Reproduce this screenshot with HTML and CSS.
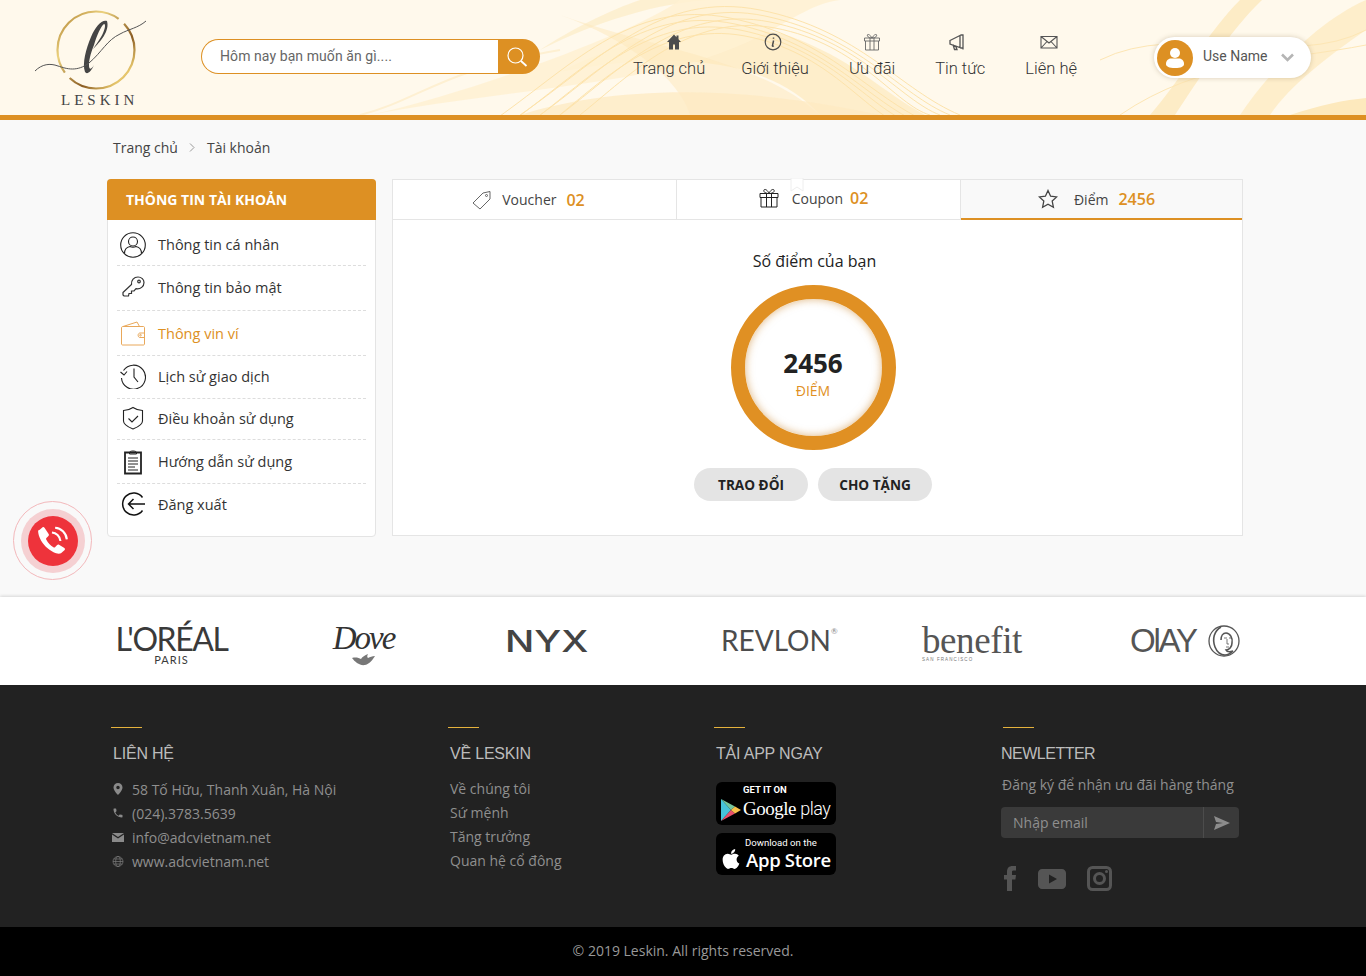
FILE: index.html
```html
<!DOCTYPE html>
<html lang="en">
<head>
  <meta charset="UTF-8" />
  <meta name="viewport" content="width=device-width, initial-scale=1.0"/>
  <title>Leskin - Tài khoản</title>
  <link rel="stylesheet" href="styles.css">
</head>
<body>

  <header class="header">
    <!-- waves behind the header -->
    <svg class="header-bg" viewBox="0 0 1366 115" preserveAspectRatio="none">
      <defs>
        <g id="wave-a" fill="none" stroke="#fde3ab" stroke-width="1">
          <path d="M520 115C600 60 660 -10 760 10S900 90 960 115"/>
          <path d="M540 115C610 65 670 -4 765 16S900 95 950 115"/>
          <path d="M560 115C620 70 680 4 770 22S900 100 940 115"/>
          <path d="M580 115C630 75 690 12 775 28S895 105 930 115"/>
        </g>
      </defs>
      <path d="M540 50C600 20 670 -2 730 0H640C610 10 570 30 540 50Z" fill="#fdeecb" opacity=".8"/>
      <path d="M560 72C640 30 740 15 800 40S880 90 925 115H820C780 70 700 45 560 72Z" fill="#fde9bd" opacity=".7"/>
      <path d="M370 115C470 95 620 85 700 60S800 5 840 0H680C640 30 480 90 370 115Z" fill="#fff1d2" opacity=".85"/>
      <path d="M560 15C660 50 760 60 820 115H690C680 80 630 40 560 15Z" fill="#fde8ba" opacity=".5"/>
      <path d="M520 115C600 90 720 80 880 115Z" fill="#fdeac2" opacity=".75"/>
      <use href="#wave-a"/>
      <use href="#wave-a" x="-30" y="8"/>
      <path d="M1150 115C1180 80 1210 30 1240 0H1262C1230 30 1195 85 1175 115Z" fill="#fde9bd" opacity=".8"/>
      <path d="M1240 115C1270 70 1320 20 1366 0V30C1330 55 1290 85 1270 115Z" fill="#fde9bd" opacity=".7"/>
      <path d="M1290 115C1320 105 1345 100 1366 98V115Z" fill="#fde9bd"/>
      <path d="M1100 60C1180 20 1290 70 1366 30" fill="none" stroke="#fde6b4" stroke-width="1"/>
      <path d="M1120 115C1200 60 1290 60 1366 45" fill="none" stroke="#fde6b4" stroke-width="1"/>
      <path d="M360 115C420 100 440 70 560 50" fill="none" stroke="#fef0d2" stroke-width="2"/>
    </svg>

    <a class="logo" href="#">
      <svg class="logo-mark" width="112" height="84" viewBox="0 0 112 84">
        <defs>
          <linearGradient id="gold" x1="0" y1="0" x2="1" y2="1">
            <stop offset="0" stop-color="#a8792a"/>
            <stop offset=".3" stop-color="#ecd27e"/>
            <stop offset=".65" stop-color="#8a5c22"/>
            <stop offset=".85" stop-color="#e7c76c"/>
            <stop offset="1" stop-color="#6b4418"/>
          </linearGradient>
        </defs>
        <circle cx="62" cy="42" r="38.500" pathLength="100" stroke-dasharray="37 3 45 3 12 0" fill="none" stroke="url(#gold)" stroke-width="2.200"/>
        <path d="M73 13C68 11 61 19 57 29C52 41 48 55 51 64C53 67 57 64 60 57C57 62 55 62 55 57C55 50 58 42 60 37C63 27 67 18 70 16C72 16 71 22 67 29C64 34 61 38 59 41C66 34 76 23 73 13Z" fill="#454545"/>
        <path d="M1 63C8 56 16 55 24 58C33 61 43 64 55 55C68 44 73 32 86 26C95 21 104 20 112 13" fill="none" stroke="#555" stroke-width="1"/>
      </svg>
      <span class="logo-name">LESKIN</span>
    </a>

    <form class="search">
      <input class="search-input" type="text" placeholder="Hôm nay bạn muốn ăn gì....">
      <button class="search-btn" type="button">
        <svg width="22" height="22" viewBox="0 0 22 22" fill="none" stroke="#fff" stroke-width="1.200"><circle cx="9.500" cy="9.500" r="7.500"/><path d="M15 15l5.500 5" stroke-width="1.800"/></svg>
      </button>
    </form>

    <nav class="nav">
      <a class="nav-item nav-home" href="#">
        <svg width="18" height="18" viewBox="0 0 18 18" fill="#4d4d4d"><path d="M9 1.500L2 9h2v7.500h4v-5h2v5h4V9h2l-2.500-2.700V2.500h-2v1.700z"/></svg>
        Trang chủ
      </a>
      <a class="nav-item nav-about" href="#">
        <svg width="18" height="18" viewBox="0 0 18 18" fill="none" stroke="#4d4d4d" stroke-width="1.200"><circle cx="9" cy="9" r="7.800"/><path d="M9.500 4.500v1.200M9.600 7.500L8.400 12.800c0 .5.500.6 1.300-.2" stroke-width="1.500"/></svg>
        Giới thiệu
      </a>
      <a class="nav-item" href="#">
        <svg width="18" height="18" viewBox="0 0 18 18" fill="none" stroke="#666" stroke-width=".9"><path d="M1.500 5h15v3h-15zM2.500 8v9h13V8M7 5v12M11 5v12M9 5C7 1 3.500 .5 4.500 3 5 4.300 7 5 9 5c2 0 4-.7 4.500-2C14.500 .5 11 1 9 5z"/></svg>
        Ưu đãi
      </a>
      <a class="nav-item nav-news" href="#">
        <svg width="20" height="18" viewBox="0 0 20 18" fill="none" stroke="#555" stroke-width="1.300"><path d="M2 7.500l10-5v12l-10-3.500zM5 11.500l1.500 5h2.500l-1.500-4M15 1.500v15M12.500 2h3M12.500 15h3"/></svg>
        Tin tức
      </a>
      <a class="nav-item nav-news" href="#">
        <svg width="18" height="18" viewBox="0 0 18 18" fill="none" stroke="#555" stroke-width="1.100"><path d="M1 3.500h16v11.500H1zM1 3.500l8 6.500 8-6.500M1 15l6-6.500M17 15l-6-6.500"/></svg>
        Liên hệ
      </a>
    </nav>

    <div class="user">
      <span class="user-avatar">
        <svg width="18" height="22" viewBox="0 0 18 22" fill="#fff"><circle cx="9" cy="6" r="5"/><path d="M0 17c0-4 3-5.500 5-5.500h8c2 0 5 1.500 5 5.500 0 2.500-3 4-9 4s-9-1.500-9-4z"/></svg>
      </span>
      <span class="user-name">Use Name</span>
      <svg class="user-caret" width="13" height="9" viewBox="0 0 13 9" fill="none" stroke="#b5b5b5" stroke-width="2.600"><path d="M1 1.500l5.500 5.500 5.500-5.500"/></svg>
    </div>
  </header>

  <main class="main">
    <div class="breadcrumb">
      <a href="#">Trang chủ</a>
      <svg width="6" height="9" viewBox="0 0 6 9" fill="none" stroke="#999"><path d="M1 .5l4 4-4 4"/></svg>
      <a href="#">Tài khoản</a>
    </div>

    <div class="account">
      <aside class="side">
        <h3 class="side-title">THÔNG TIN TÀI KHOẢN</h3>
        <ul class="side-menu">
          <li class="side-item">
            <svg width="26" height="26" viewBox="0 0 26 26" fill="none" stroke="#222" stroke-width="1.100"><circle cx="13" cy="13" r="12.300"/><circle cx="13" cy="9.500" r="4.500"/><path d="M4.500 21.500c0-5 3-6.500 5.500-7 2 1 4 1 6 0 2.500.5 5.500 2 5.500 7"/></svg>
            Thông tin cá nhân
          </li>
          <li class="side-item">
            <svg width="26" height="24" viewBox="0 0 26 24" fill="none" stroke="#333" stroke-width="1.200"><path d="M3 17.500l8.500-8C11 5 14 2 18 2c3.500 0 6 2.500 6 5.500 0 4-3.500 7-8 6.200l-2 2.300h-2.500v2.500H9l-.5 2.500H4l-1-1z"/><circle cx="19" cy="6.500" r="1.300"/></svg>
            Thông tin bảo mật
          </li>
          <li class="side-item is-active">
            <svg width="26" height="26" viewBox="0 0 26 26" fill="none" stroke="#e9a85a" stroke-width="1"><path d="M3 6.500h20.500c.5 0 1 .5 1 1V24c0 .5-.5 1-1 1H2.500c-.5 0-1-.5-1-1V8C1.500 7 2 6.500 3 6.500zM3 6.500L17 2l2.500 4.500M24.500 13h-4.500c-2.500 0-2.500 4.500 0 4.500h4.500"/><circle cx="20.500" cy="15.200" r=".8"/></svg>
            Thông vin ví
          </li>
          <li class="side-item">
            <svg width="26" height="26" viewBox="0 0 26 26" fill="none" stroke="#222" stroke-width="1.100"><path d="M3.500 7.500A12 12 0 1 1 1.500 15M.5 9l3.500 3 3-3.500M14 5.500V14l4 5"/></svg>
            Lịch sử giao dịch
          </li>
          <li class="side-item">
            <svg width="26" height="26" viewBox="0 0 26 26" fill="none" stroke="#222" stroke-width="1.100"><path d="M13 2.500C10 4.500 7 5.500 3.500 5.500v10.500c0 3 4.500 6 9.500 8 5-2 9.500-5 9.500-8V5.500C19 5.500 16 4.500 13 2.500zM8.500 13.500l3.500 3.500 6-6"/></svg>
            Điều khoản sử dụng
          </li>
          <li class="side-item">
            <svg width="26" height="26" viewBox="0 0 26 26" fill="none" stroke="#222"><path d="M5 3.500h16v21H5z" stroke-width="1.800"/><path d="M9.500 3.500c0-2 7-2 7 0v1.500h-7zM8 9h10M8 12h10M8 15h10M8 18h7M8 21h10" stroke-width="1"/></svg>
            Hướng dẫn sử dụng
          </li>
          <li class="side-item">
            <svg width="26" height="26" viewBox="0 0 26 26" fill="none" stroke="#111" stroke-width="1.500"><path d="M22.500 6.500A11 11 0 1 0 22.500 19.500M25 13H9M13.500 8L8.500 13l5 5"/></svg>
            Đăng xuất
          </li>
        </ul>
      </aside>

      <section class="panel">
        <div class="tabs">
          <a class="tab tab-voucher" href="#">
            <svg width="20" height="20" viewBox="0 0 20 20" fill="none" stroke="#555" stroke-width=".9"><path d="M1 13L11 3l7-1.500L18 9 8 19zM15 5v0"/><circle cx="14.500" cy="5.500" r="1"/></svg>
            <span>Voucher</span><b class="tab-num">02</b>
          </a>
          <a class="tab tab-coupon" href="#">
            <svg class="tab-ghost" width="14" height="14" viewBox="0 0 14 14" fill="#fff" stroke="#eee"><path d="M1 0h12v13l-6-4-6 4z"/></svg>
            <svg class="tab-icon" width="20" height="20" viewBox="0 0 20 20" fill="none" stroke="#222" stroke-width="1"><path d="M1 5.500h18v4H1zM2 9.500v9.500h16V9.500M7.500 5.500V19M12.500 5.500V19M10 5.500C8 .5 4 .5 5 3.500 5.500 5 8 5.500 10 5.500c2 0 4.500-.5 5-2C16 .5 12 .5 10 5.500z"/></svg>
            <span>Coupon</span><b class="tab-num">02</b>
          </a>
          <a class="tab is-active" href="#">
            <svg class="tab-icon" width="20" height="20" viewBox="0 0 20 20" fill="none" stroke="#444" stroke-width="1.300"><path d="M10 1.500l2.600 5.700 6.100.7-4.500 4.200 1.200 6.200L10 15.200l-5.400 3.100 1.200-6.200-4.500-4.200 6.100-.7z"/></svg>
            <span>Điểm</span><b class="tab-num">2456</b>
          </a>
        </div>

        <div class="points">
          <p class="points-label">Số điểm của bạn</p>
          <div class="points-ring">
            <strong class="points-value">2456</strong>
            <span class="points-unit">ĐIỂM</span>
          </div>
          <div class="points-actions">
            <button class="pill" type="button">TRAO ĐỔI</button>
            <button class="pill" type="button">CHO TẶNG</button>
          </div>
        </div>
      </section>
    </div>
  </main>

  <div class="brands">
    <div class="brand brand-loreal">L'ORÉAL<small>PARIS</small></div>
    <div class="brand brand-dove">Dove<svg width="24" height="13" viewBox="0 0 24 13" fill="#777"><path d="M0 4c4-1 7 0 9 1 1-2 4-4 7-5-1 2-1 3 0 4 2-1 4-2 7-2-2 3-5 8-10 9-5 1-10-3-13-7z"/></svg></div>
    <div class="brand brand-nyx"><span>NYX</span></div>
    <div class="brand brand-revlon">REVLON<sup>®</sup></div>
    <div class="brand brand-benefit">benefit<small>SAN FRANCISCO</small></div>
    <div class="brand brand-olay">OlAY
      <svg width="32" height="32" viewBox="0 0 32 32" fill="none" stroke="#555"><circle cx="16" cy="16" r="15" stroke-width="1.300"/><path d="M13 2C6 6 4 14 7 22c2 5 6 8 10 8 3 0 6-2 8-4-3 1-6 1-7-1 3 0 6-3 6-7 1-5-2-10-6-10-3 0-5 3-5 7" stroke-width="1.600"/><path d="M16 13h3M21 13h2M19 14v5h2M18 22h3" stroke-width=".8"/></svg>
    </div>
  </div>

  <footer class="footer">
    <div class="footer-main">
      <div class="col col-contact">
        <h4 class="col-title">LIÊN HỆ</h4>
        <ul class="contact">
          <li>
            <svg width="10" height="12" viewBox="0 0 10 12" fill="#8a8a8a"><path d="M5 0a4.500 4.500 0 0 0-4.500 4.500C.5 7.500 5 12 5 12s4.500-4.500 4.500-7.500A4.500 4.500 0 0 0 5 0zm0 6.300a1.700 1.700 0 1 1 0-3.500 1.700 1.700 0 0 1 0 3.500z"/></svg>
            58 Tố Hữu, Thanh Xuân, Hà Nội
          </li>
          <li>
            <svg width="12" height="12" viewBox="0 0 24 24" fill="#8a8a8a"><path d="M6.620 10.790c1.440 2.830 3.760 5.140 6.590 6.590l2.200-2.200c.27-.27.67-.36 1.020-.24 1.120.37 2.330.57 3.570.57.55 0 1 .45 1 1V20c0 .55-.45 1-1 1-9.390 0-17-7.610-17-17 0-.55.45-1 1-1h3.500c.55 0 1 .45 1 1 0 1.250.2 2.450.57 3.570.11.35.03.74-.25 1.020l-2.200 2.200z"/></svg>
            (024).3783.5639
          </li>
          <li>
            <svg width="12" height="9" viewBox="0 0 12 9" fill="#8a8a8a"><path d="M0 0h12L6 4zM0 1.500l6 4 6-4V9H0z"/></svg>
            info@adcvietnam.net
          </li>
          <li>
            <svg width="11" height="11" viewBox="0 0 11 11" fill="none" stroke="#7c7c7c" stroke-width=".7"><circle cx="5.500" cy="5.500" r="5"/><ellipse cx="5.500" cy="5.500" rx="2.300" ry="5"/><path d="M.5 5.500h10M1.300 3h8.400M1.300 8h8.400"/></svg>
            www.adcvietnam.net
          </li>
        </ul>
      </div>

      <div class="col col-about">
        <h4 class="col-title">VỀ LESKIN</h4>
        <ul class="links">
          <li><a href="#">Về chúng tôi</a></li>
          <li><a href="#">Sứ mệnh</a></li>
          <li><a href="#">Tăng trưởng</a></li>
          <li><a href="#">Quan hệ cổ đông</a></li>
        </ul>
      </div>

      <div class="col col-app">
        <h4 class="col-title">TẢI APP NGAY</h4>
        <a class="store store-google" href="#">
          <svg width="20" height="22" viewBox="0 0 20 22"><path d="M0 0l10 11L0 22z" fill="#46c3d9"/><path d="M0 0l14 7.500L10 11z" fill="#74c69d"/><path d="M0 22l14-7.500L10 11z" fill="#e8506a"/><path d="M14 7.500l6 3.500-6 3.500L10 11z" fill="#f7c04a"/></svg>
          <small>GET IT ON</small>
          <span>Google <i>play</i></span>
        </a>
        <a class="store store-apple" href="#">
          <svg width="20" height="22" viewBox="3 2 18 20" fill="#fff"><path d="M17.050 20.280c-.98.95-2.050.8-3.080.35-1.090-.46-2.090-.48-3.240 0-1.440.62-2.200.44-3.060-.35C2.790 15.250 3.510 7.590 9.050 7.310c1.350.07 2.290.74 3.080.8 1.180-.24 2.310-.93 3.570-.84 1.510.12 2.650.72 3.400 1.800-3.120 1.870-2.380 5.980.48 7.130-.57 1.500-1.310 2.990-2.540 4.090zM12.030 7.250c-.15-2.230 1.660-4.070 3.740-4.250.29 2.580-2.340 4.500-3.740 4.250z"/></svg>
          <small>Download on the</small>
          <span>App Store</span>
        </a>
      </div>

      <div class="col col-news">
        <h4 class="col-title">NEWLETTER</h4>
        <p class="news-text">Đăng ký để nhận ưu đãi hàng tháng</p>
        <form class="news-form">
          <input class="news-input" type="text" placeholder="Nhập email">
          <button class="news-send" type="button">
            <svg width="16" height="14" viewBox="0 0 16 14" fill="#8c8c8c"><path d="M0 0l16 7-16 7 2-6 7-1-7-1z"/></svg>
          </button>
        </form>
        <div class="social">
          <svg width="12" height="25" viewBox="0 0 12 25" fill="#555"><path d="M3 25V13.500H0V9h3V6c0-4 2-6 5.500-6H12v4.500H9.500C8 4.500 8 5.200 8 6.500V9h4l-.6 4.500H8V25z"/></svg>
          <svg width="28" height="20" viewBox="0 0 28 20" fill="#555"><path d="M4 0h20c2 0 4 2 4 4v12c0 2-2 4-4 4H4c-2 0-4-2-4-4V4c0-2 2-4 4-4zm7 5.500v9l8-4.500z" fill-rule="evenodd"/></svg>
          <svg width="25" height="25" viewBox="0 0 25 25" fill="none" stroke="#555"><rect x="1.500" y="1.500" width="22" height="22" rx="4" stroke-width="3"/><circle cx="12.500" cy="12.500" r="5" stroke-width="3"/><circle cx="19.500" cy="5.500" r="1.500" fill="#555" stroke="none"/></svg>
        </div>
      </div>
    </div>
    <div class="copyright">© 2019 Leskin. All rights reserved.</div>
  </footer>

  <!-- floating call button -->
  <a class="call" href="#">
    <span class="call-mid">
      <span class="call-core">
        <svg width="34" height="34" viewBox="0 0 32 32"><path d="M2 6.500c0 1 .2 3 1.500 6.500 3 7 8 11 13 13.500 2 1 5 2 7 1l3.500-3c.5-.7.3-1.300-.3-1.800l-5-3.200c-.7-.4-1.300-.2-1.800.3l-2 2c-.5.4-1 .4-1.500.1-3-1.800-5-4-6.800-7.300-.3-.6-.2-1 .2-1.500l1.900-1.900c.5-.5.6-1.100.2-1.800L8 3.500c-.5-.7-1.200-.8-1.800-.4L3.500 5.500C2.700 5.800 2 6 2 6.500z" fill="#fff"/><path d="M15 8c4 .3 7.500 3.500 8 8M18 3.500c5.500.3 10.500 5 11 11" fill="none" stroke="#fff" stroke-width="2"/></svg>
      </span>
    </span>
  </a>

</body>
</html>
```

FILE: styles.css
```css
* {
  box-sizing: border-box;
}
body {
  margin: 0;
  background: #f9f9f9;
  font-family: "Open Sans", "Noto Sans", sans-serif;
  font-size: 14px;
  color: #333;
}
a {
  color: inherit;
  text-decoration: none;
}
ul {
  margin: 0;
  padding: 0;
  list-style: none;
}

/* header */
.header {
  position: relative;
  display: flex;
  align-items: flex-start;
  height: 120px;
  background: #fff9ec;
  border-bottom: 5px solid #dd9023;
  overflow: hidden;
}
.header-bg {
  position: absolute;
  left: 0;
  top: 0;
  width: 100%;
  height: 115px;
}
.logo {
  position: relative;
  display: flex;
  flex-direction: column;
  width: 112px;
  margin: 8px 0 0 34px;
}
.logo-mark {
  display: block;
}
.logo-name {
  margin: 0 0 0 27px;
  font-family: "Liberation Serif", serif;
  font-size: 15px;
  line-height: 17px;
  letter-spacing: 4px;
  color: #444;
  white-space: nowrap;
}
.search {
  position: relative;
  display: flex;
  width: 339px;
  height: 35px;
  margin: 39px 0 0 55px;
}
.search-input {
  flex: 1;
  min-width: 0;
  padding: 0 10px 2px 18px;
  border: 1px solid #dd9023;
  border-right: 0;
  border-radius: 18px 0 0 18px;
  background: #fff;
  font-family: Roboto, sans-serif;
  font-size: 14px;
  letter-spacing: .08px;
  outline: none;
}
.search-input::placeholder {
  color: #666;
  opacity: 1;
}
.search-btn {
  width: 42px;
  padding: 0 4px 0 0;
  border: 0;
  border-radius: 0 18px 18px 0;
  background: #dd9023;
  display: flex;
  align-items: center;
  justify-content: center;
}
.nav {
  position: relative;
  display: flex;
  gap: 40px;
  margin: 33px 0 0 93px;
}
.nav-item {
  display: flex;
  flex-direction: column;
  align-items: center;
  gap: 8px;
  font-family: Roboto, sans-serif;
  font-size: 16.500px;
  font-weight: 300;
  line-height: 20px;
  color: #333;
}
.nav-home {
  margin-right: -4px;
}
.nav-home svg {
  margin-left: 10px;
}
.nav-about svg,
.nav-news svg {
  margin-right: 4px;
}
.user {
  position: relative;
  display: flex;
  align-items: center;
  width: 157px;
  height: 41px;
  margin: 37px 55px 0 auto;
  padding-left: 3px;
  background: #fff;
  border-radius: 21px;
  box-shadow: 0 0 5px rgba(120, 100, 60, .3);
}
.user-avatar {
  display: flex;
  align-items: center;
  justify-content: center;
  width: 36px;
  height: 36px;
  border-radius: 50%;
  background: #dd9023;
}
.user-name {
  margin-left: 10px;
  padding-bottom: 3px;
  font-family: Roboto, sans-serif;
  color: #555;
}
.user-caret {
  margin-left: 13px;
}

/* main */
.main {
  height: 477px;
  padding: 0 0 0 107px;
}
.breadcrumb {
  display: flex;
  align-items: center;
  gap: 11px;
  height: 59px;
  padding: 0 0 5px 6px;
  color: #444;
}
.breadcrumb svg {
  margin-right: 1px;
}
.account {
  display: flex;
  align-items: flex-start;
  gap: 16px;
  width: 1136px;
}
.side {
  width: 269px;
  height: 358px;
  background: #fff;
  border: 1px solid #e4e4e4;
  border-radius: 4px;
}
.side-title {
  height: 41px;
  margin: -1px -1px 0;
  padding: 0 19px;
  background: #dd9023;
  border-radius: 4px 4px 0 0;
  color: #fff;
  font-size: 14px;
  font-weight: 700;
  line-height: 41px;
}
.side-menu {
  padding: 1px 9px 0;
}
.side-item {
  display: flex;
  align-items: center;
  gap: 12px;
  padding: 0 0 2px 3px;
  height: 45px;
  border-bottom: 1px dashed #ddd;
  font-size: 14.500px;
  color: #333;
}
.side-item:first-child {
  padding: 3px 0 0 3px;
}
.side-item.is-active {
  padding-bottom: 0;
  color: #dd9023;
}
.side-item:nth-child(4) {
  height: 43px;
}
.side-item:nth-child(5) {
  height: 41px;
}
.side-item:nth-child(6) {
  height: 44px;
  padding-bottom: 0;
}
.side-item:last-child {
  height: 44px;
  padding-bottom: 4px;
  border-bottom: 0;
}
.panel {
  width: 851px;
  height: 357px;
  background: #fff;
  border: 1px solid #e5e5e5;
}
.tabs {
  display: flex;
  height: 40px;
}
.tab {
  position: relative;
  flex: 1;
  display: flex;
  align-items: center;
  justify-content: center;
  gap: 10px;
  padding-right: 10px;
  border-right: 1px solid #e5e5e5;
  border-bottom: 1px solid #e5e5e5;
  font-size: 14px;
  color: #444;
}
.tab:last-child {
  border-right: 0;
}
.tab-voucher,
.tab-coupon {
  flex: 0 0 284px;
}
.tab-voucher {
  padding-right: 12px;
}
.tab-coupon {
  gap: 7px;
  padding-bottom: 3px;
}
.tab-icon {
  margin-right: 6px;
}
.tab-ghost {
  position: absolute;
  left: 113px;
  top: -2px;
}
.tab.is-active {
  background: #f9f9f9;
  border-bottom: 2px solid #dd9023;
}
.tab-num {
  font-size: 16px;
  font-weight: 600;
  color: #dd9023;
}
.points {
  display: flex;
  flex-direction: column;
  align-items: center;
  padding-right: 9px;
}
.points-label {
  margin: 30px 0 13px;
  padding-left: 3px;
  font-size: 16px;
  line-height: 22px;
  color: #222;
}
.points-ring {
  display: flex;
  flex-direction: column;
  align-items: center;
  justify-content: center;
  width: 165px;
  height: 165px;
  padding-top: 14px;
  border: 14px solid #e09023;
  border-radius: 50%;
  box-shadow: inset 0 0 8px rgba(200, 130, 40, .6);
}
.points-value {
  font-size: 26px;
  line-height: 30px;
  color: #222;
}
.points-unit {
  margin-top: 3px;
  font-size: 14px;
  font-weight: 500;
  line-height: 20px;
  color: #e09023;
}
.points-actions {
  display: flex;
  gap: 10px;
  margin-top: 18px;
}
.pill {
  width: 114px;
  height: 33px;
  border: 0;
  border-radius: 17px;
  background: #e4e4e4;
  font-family: inherit;
  font-size: 13.600px;
  font-weight: 700;
  color: #222;
}

/* brand strip, text stands in for the logo art */
.brands {
  display: grid;
  grid-template-columns: 217px 174px 216px 199px 208px 1fr;
  align-items: center;
  height: 88px;
  padding-left: 115px;
  background: #fff;
  box-shadow: 0 -1px 3px rgba(0, 0, 0, .14);
  color: #4c4c4c;
  position: relative;
}
.brand {
  display: flex;
  flex-direction: column;
  align-items: flex-start;
}
.brand-loreal {
  width: 113px;
  margin-top: 6px;
  align-items: center;
  font-family: Lato, sans-serif;
  font-size: 32px;
  font-weight: 400;
  line-height: 31px;
  letter-spacing: -1.400px;
  white-space: nowrap;
  color: #3a3a3a;
}
.brand-loreal small {
  font-size: 11px;
  font-weight: 400;
  line-height: 12px;
  letter-spacing: 1px;
}
.brand-dove {
  width: 61px;
  margin: 6px 0 0 1px;
  align-items: center;
  font-family: "Liberation Serif", serif;
  font-style: italic;
  font-size: 33px;
  line-height: 32px;
  letter-spacing: -2px;
  color: #333;
}
.brand-nyx span {
  display: block;
  margin-left: -1px;
  font-family: Inter, sans-serif;
  font-size: 30px;
  font-weight: 500;
  line-height: 36px;
  transform: scaleX(1.290);
  transform-origin: left center;
  color: #444;
}
.brand-revlon {
  flex-direction: row;
  margin: -3px 0 0 -1px;
  font-family: Lato, sans-serif;
  font-size: 28px;
  line-height: 30px;
  letter-spacing: 0;
}
.brand-revlon sup {
  font-size: 8px;
  line-height: 12px;
  color: #888;
}
.brand-benefit {
  width: 100px;
  margin: 5px 0 0 1px;
  font-family: "Liberation Serif", serif;
  font-size: 37px;
  line-height: 32px;
  letter-spacing: -.4px;
  color: #555;
}
.brand-benefit small {
  font-family: "Liberation Sans", sans-serif;
  font-size: 4.500px;
  line-height: 6px;
  letter-spacing: 1.100px;
  color: #777;
}
.brand-olay {
  flex-direction: row;
  align-items: center;
  gap: 12px;
  margin-left: 1px;
  font-family: "Liberation Sans", sans-serif;
  font-size: 33px;
  letter-spacing: -2.200px;
  color: #555;
}

/* footer */
.footer {
  background: #222;
  color: #8f8f8f;
}
.footer-main {
  position: relative;
  display: grid;
  grid-template-columns: 337px 266px 287px 241px;
  height: 242px;
  padding: 42px 0 0 111px;
}
.col-title {
  position: relative;
  margin: 18px 0 0 2px;
  font-family: "Liberation Sans", sans-serif;
  font-size: 16px;
  font-weight: 400;
  line-height: 18px;
  color: #bcbcbc;
  letter-spacing: -.2px;
}
.col-title::before {
  content: "";
  position: absolute;
  left: -2px;
  top: -18px;
  width: 31px;
  height: 1px;
  background: #e5b23c;
}
.col-news .col-title {
  margin-left: 0;
  letter-spacing: -.5px;
}
.col-news .col-title::before {
  left: 2px;
}
.contact {
  margin-top: 14px;
}
.contact li {
  display: flex;
  align-items: center;
  height: 24px;
  padding-left: 1px;
}
.contact svg {
  width: 12px;
  margin-right: 8px;
}
.links {
  margin: 14px 0 0 2px;
}
.links li {
  height: 24px;
  line-height: 24px;
}
.store {
  position: relative;
  display: block;
  width: 120px;
  height: 43px;
  margin: 8px 0 0 2px;
  padding: 0 0 0 27px;
  border-radius: 6px;
  background: #000;
  color: #fff;
}
.col-app .col-title + .store {
  margin-top: 19px;
}
.store svg {
  position: absolute;
  left: 5px;
  top: 17px;
}
.store small {
  display: block;
  font-family: Roboto, sans-serif;
  line-height: 14px;
  padding-top: 1px;
}
.store-google small {
  font-size: 9.500px;
  font-weight: 700;
}
.store-google span {
  display: block;
  font-family: "Liberation Serif", serif;
  font-size: 19px;
  line-height: 23px;
  letter-spacing: -.5px;
  white-space: nowrap;
}
.store-google i {
  font-family: Roboto, sans-serif;
  font-style: normal;
  font-weight: 300;
  font-size: 18px;
}
.store-apple {
  height: 42px;
}
.store-apple svg {
  left: 5px;
  top: 15px;
}
.store-apple small {
  padding-top: 4px;
  font-size: 9.600px;
  line-height: 12px;
  margin-left: 2px;
}
.store-apple span {
  display: block;
  margin: 0 0 0 3px;
  font-family: "Open Sans", sans-serif;
  font-size: 18.500px;
  font-weight: 600;
  line-height: 22px;
  letter-spacing: -.3px;
  white-space: nowrap;
}
.news-text {
  margin: 12px 0 0 1px;
  line-height: 20px;
  white-space: nowrap;
}
.news-form {
  display: flex;
  width: 238px;
  height: 31px;
  margin-top: 12px;
  background: #3a3a3a;
  border-radius: 4px;
  overflow: hidden;
}
.news-input {
  flex: 1;
  min-width: 0;
  padding: 0 12px;
  border: 0;
  background: none;
  font-family: inherit;
  font-size: 14px;
  outline: none;
}
.news-input::placeholder {
  color: #8f8f8f;
  opacity: 1;
}
.news-send {
  width: 36px;
  padding: 0;
  border: 0;
  border-left: 1px solid #4c4c4c;
  background: none;
  display: flex;
  align-items: center;
  justify-content: center;
}
.social {
  display: flex;
  align-items: center;
  gap: 21.500px;
  margin: 28px 0 0 3px;
}
.copyright {
  height: 49px;
  background: #000;
  color: #999;
  line-height: 47px;
  text-align: center;
}

/* floating call button */
.call {
  position: absolute;
  left: 13px;
  top: 501px;
  width: 79px;
  height: 79px;
  display: flex;
  align-items: center;
  justify-content: center;
  border: 1px solid #f3b8bb;
  border-radius: 50%;
}
.call-mid {
  display: flex;
  align-items: center;
  justify-content: center;
  width: 64px;
  height: 64px;
  border-radius: 50%;
  background: #f5d0d2;
}
.call-core {
  display: flex;
  align-items: center;
  justify-content: center;
  width: 50px;
  height: 50px;
  border-radius: 50%;
  background: #ee333b;
}
```
